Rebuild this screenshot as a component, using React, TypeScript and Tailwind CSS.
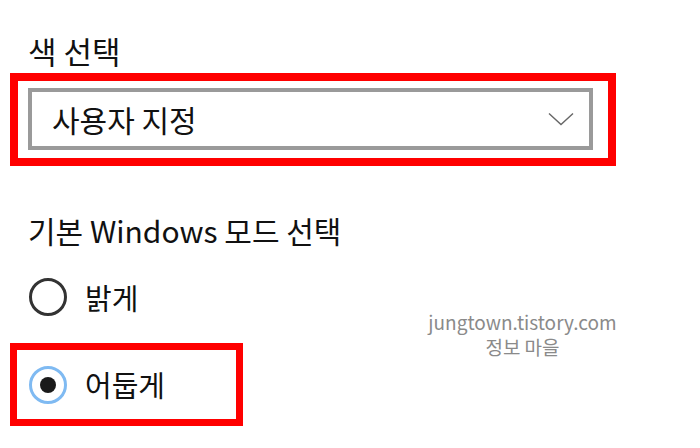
import React from 'react';

const font = { fontFamily: '"Noto Sans CJK KR", "Noto Sans", sans-serif' };

const Radio: React.FC<{ checked?: boolean }> = ({ checked }) =>
  checked ? (
    <span className="flex h-[38px] w-[38px] items-center justify-center rounded-full border-[3px] border-[#7fbaf2]">
      <span className="h-[16px] w-[16px] rounded-full bg-[#1a1a1a]" />
    </span>
  ) : (
    <span className="h-[38px] w-[38px] rounded-full border-[3px] border-[#333333]" />
  );

export default function App() {
  return (
    <div
      className="relative h-[448px] w-[700px] overflow-hidden bg-white text-[#111111]"
      style={font}
    >
      <div className="pl-[28px] pt-[32px] text-[31px] leading-[38px]">색 선택</div>

      <div className="ml-[10px] mt-[3px] h-[93px] w-[606px] border-[8px] border-[#ff0000] pl-[10px] pt-[7px]">
        <div className="flex h-[62px] w-[565px] items-center justify-between border-[4px] border-[#9a9a9a] pl-[20px] pr-[15px]">
          <span className="text-[30px] leading-none">사용자 지정</span>
          <svg width="26" height="14" viewBox="0 0 26 14" fill="none">
            <path d="M1 1.5 L13 12.5 L25 1.5" stroke="#666666" strokeWidth="1.4" />
          </svg>
        </div>
      </div>

      <div className="pl-[28px] pt-[45px] text-[30px] leading-[38px]">기본 Windows 모드 선택</div>

      <div className="flex items-center gap-[18px] pl-[29px] pt-[29px]">
        <Radio />
        <span className="text-[29px] leading-none">밝게</span>
      </div>

      <div className="ml-[10px] mt-[27px] flex h-[83px] w-[233px] items-center gap-[18px] border-[7px] border-[#ff0000] pl-[12px]">
        <Radio checked />
        <span className="text-[29px] leading-none">어둡게</span>
      </div>

      <div className="absolute left-[400px] top-[310px] flex w-[245px] flex-col items-center gap-[2px] text-[19px] leading-[23px] text-[#8a8a8a]">
        <span>jungtown.tistory.com</span>
        <span>정보 마을</span>
      </div>
    </div>
  );
}
